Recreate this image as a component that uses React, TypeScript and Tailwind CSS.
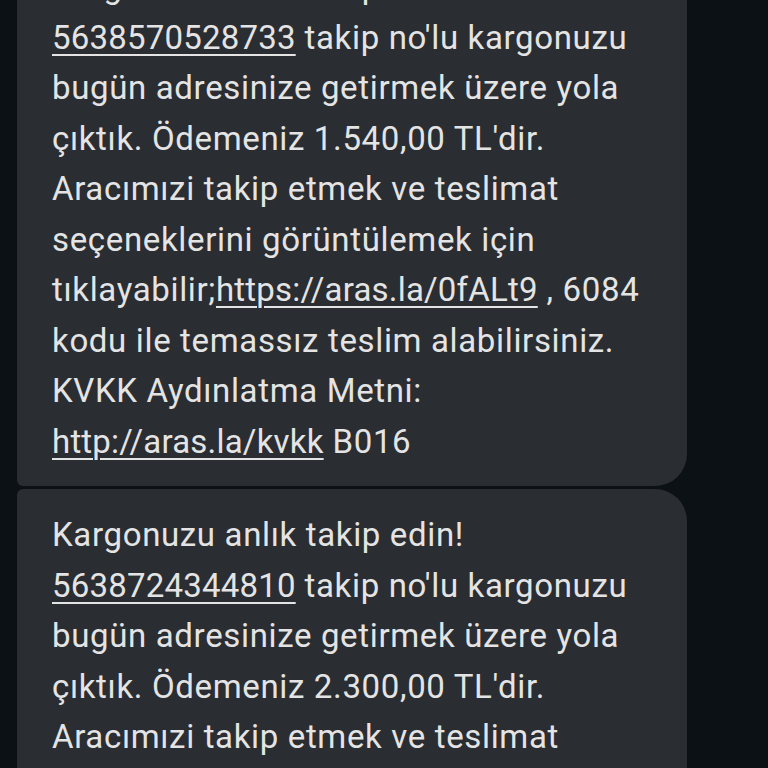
import React from "react";

const Line = ({ children }: { children: React.ReactNode }) => (
  <div className="whitespace-nowrap">{children}</div>
);

const U = ({ children }: { children: React.ReactNode }) => (
  <span className="underline decoration-[2px] underline-offset-[5px] tracking-[0.2px]">{children}</span>
);

export default function App() {
  return (
    <div
      className="w-[768px] h-[768px] overflow-hidden bg-[#0c1116]"
      style={{ fontFamily: "Roboto, 'Noto Sans', sans-serif" }}
    >
      <div className="flex flex-col gap-[3px] -mt-[59px] pl-[17px] text-[33px] tracking-[0.65px] leading-[50.5px] text-[#e4e4e4]">
        <div className="w-[670px] bg-[#2a2d31] rounded-tl-[6px] rounded-bl-[6px] rounded-tr-[6px] rounded-br-[32px] pl-[35px] pt-[21px] pb-[19px]">
          <Line>Kargonuzu anlık takip edin!</Line>
          <Line>
            <U>5638570528733</U> takip no'lu kargonuzu
          </Line>
          <Line>bugün adresinize getirmek üzere yola</Line>
          <Line>çıktık. Ödemeniz 1.540,00 TL'dir.</Line>
          <Line>Aracımızi takip etmek ve teslimat</Line>
          <Line>seçeneklerini görüntülemek için</Line>
          <Line>
            tıklayabilir;<U>https://aras.la/0fALt9</U> , 6084
          </Line>
          <Line>kodu ile temassız teslim alabilirsiniz.</Line>
          <Line>KVKK Aydınlatma Metni:</Line>
          <Line>
            <U>http://aras.la/kvkk</U> B016
          </Line>
        </div>
        <div className="w-[670px] bg-[#2a2d31] rounded-tl-[6px] rounded-bl-[6px] rounded-tr-[32px] rounded-br-[6px] pl-[35px] pt-[21px] pb-[19px]">
          <Line>Kargonuzu anlık takip edin!</Line>
          <Line>
            <U>5638724344810</U> takip no'lu kargonuzu
          </Line>
          <Line>bugün adresinize getirmek üzere yola</Line>
          <Line>çıktık. Ödemeniz 2.300,00 TL'dir.</Line>
          <Line>Aracımızi takip etmek ve teslimat</Line>
          <Line>seçeneklerini görüntülemek için</Line>
        </div>
      </div>
    </div>
  );
}
